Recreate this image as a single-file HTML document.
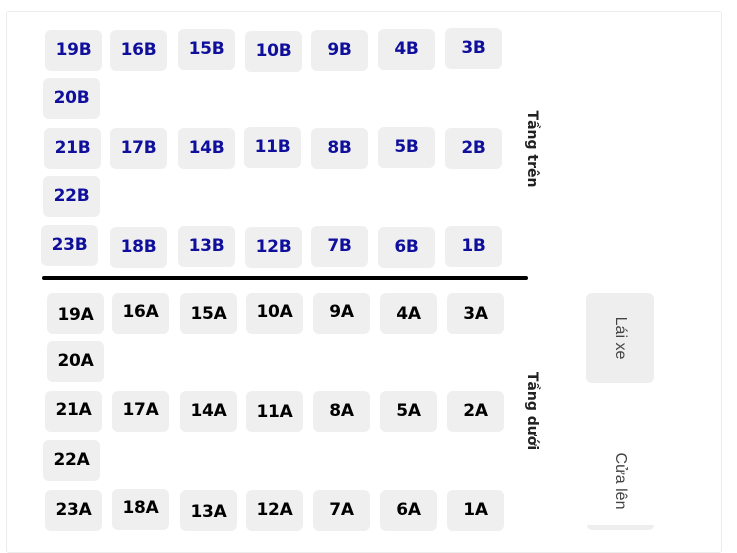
<!DOCTYPE html>
<html><head><meta charset="utf-8"><style>
body{margin:0;width:737px;height:543px;background:#fff;position:relative;overflow:hidden;font-family:"DejaVu Sans","Liberation Sans",sans-serif}
.box{position:absolute;left:6px;top:11px;width:714px;height:540px;border:1px solid #ececec;border-radius:3px}
.s{position:absolute;width:57px;height:41px;background:#efeff0;border-radius:6px;font-weight:bold;font-size:17px;line-height:41px;text-align:center;color:#000;letter-spacing:-0.3px}
.b{color:#0f0f9c}
.line{position:absolute;left:42px;top:276px;width:486px;height:4px;background:#000;border-radius:2px}
.v{position:absolute;transform:rotate(90deg);transform-origin:center;white-space:nowrap;font-size:14px}
</style></head><body>
<div class="box"></div>
<div class="s b" style="left:45px;top:30px">19B</div>
<div class="s b" style="left:110px;top:30px">16B</div>
<div class="s b" style="left:178px;top:29px">15B</div>
<div class="s b" style="left:245px;top:31px">10B</div>
<div class="s b" style="left:311px;top:30px">9B</div>
<div class="s b" style="left:378px;top:29px">4B</div>
<div class="s b" style="left:445px;top:28px">3B</div>
<div class="s b" style="left:43px;top:78px">20B</div>
<div class="s b" style="left:44px;top:128px">21B</div>
<div class="s b" style="left:110px;top:128px">17B</div>
<div class="s b" style="left:178px;top:128px">14B</div>
<div class="s b" style="left:244px;top:127px">11B</div>
<div class="s b" style="left:311px;top:128px">8B</div>
<div class="s b" style="left:378px;top:127px">5B</div>
<div class="s b" style="left:445px;top:128px">2B</div>
<div class="s b" style="left:43px;top:176px">22B</div>
<div class="s b" style="left:41px;top:225px">23B</div>
<div class="s b" style="left:110px;top:227px">18B</div>
<div class="s b" style="left:178px;top:226px">13B</div>
<div class="s b" style="left:245px;top:227px">12B</div>
<div class="s b" style="left:311px;top:226px">7B</div>
<div class="s b" style="left:378px;top:227px">6B</div>
<div class="s b" style="left:445px;top:226px">1B</div>
<div class="line"></div>
<div class="s" style="left:47px;top:293px;line-height:44px">19A</div>
<div class="s" style="left:112px;top:293px;line-height:38px">16A</div>
<div class="s" style="left:180px;top:293px;line-height:42px">15A</div>
<div class="s" style="left:246px;top:293px;line-height:38px">10A</div>
<div class="s" style="left:313px;top:293px;line-height:38px">9A</div>
<div class="s" style="left:380px;top:293px;line-height:42px">4A</div>
<div class="s" style="left:447px;top:293px;line-height:42px">3A</div>
<div class="s" style="left:47px;top:341px">20A</div>
<div class="s" style="left:45px;top:391px;line-height:38px">21A</div>
<div class="s" style="left:112px;top:391px;line-height:38px">17A</div>
<div class="s" style="left:180px;top:391px">14A</div>
<div class="s" style="left:246px;top:391px;line-height:43px">11A</div>
<div class="s" style="left:313px;top:391px">8A</div>
<div class="s" style="left:380px;top:391px">5A</div>
<div class="s" style="left:447px;top:391px">2A</div>
<div class="s" style="left:43px;top:440px">22A</div>
<div class="s" style="left:45px;top:490px">23A</div>
<div class="s" style="left:112px;top:489px;line-height:38px">18A</div>
<div class="s" style="left:180px;top:490px;line-height:44px">13A</div>
<div class="s" style="left:246px;top:490px">12A</div>
<div class="s" style="left:313px;top:490px">7A</div>
<div class="s" style="left:380px;top:490px">6A</div>
<div class="s" style="left:447px;top:490px">1A</div>
<div class="v" style="left:492px;top:141px;width:80px;text-align:center;font-weight:bold;color:#222">Tầng trên</div>
<div class="v" style="left:492px;top:403px;width:80px;text-align:center;font-weight:bold;color:#222">Tầng dưới</div>
<div style="position:absolute;left:586px;top:293px;width:68px;height:90px;background:#eeeeef;border-radius:6px"></div>
<div class="v" style="left:580px;top:329px;width:80px;text-align:center;color:#444;font-family:'Liberation Sans',sans-serif;font-size:16px">Lái xe</div>
<div class="v" style="left:580px;top:472px;width:80px;text-align:center;color:#444;font-family:'Liberation Sans',sans-serif;font-size:16px">Cửa lên</div>
<div style="position:absolute;left:587px;top:525px;width:67px;height:5px;background:#eeeeef;border-radius:0 0 6px 6px"></div>
</body></html>
